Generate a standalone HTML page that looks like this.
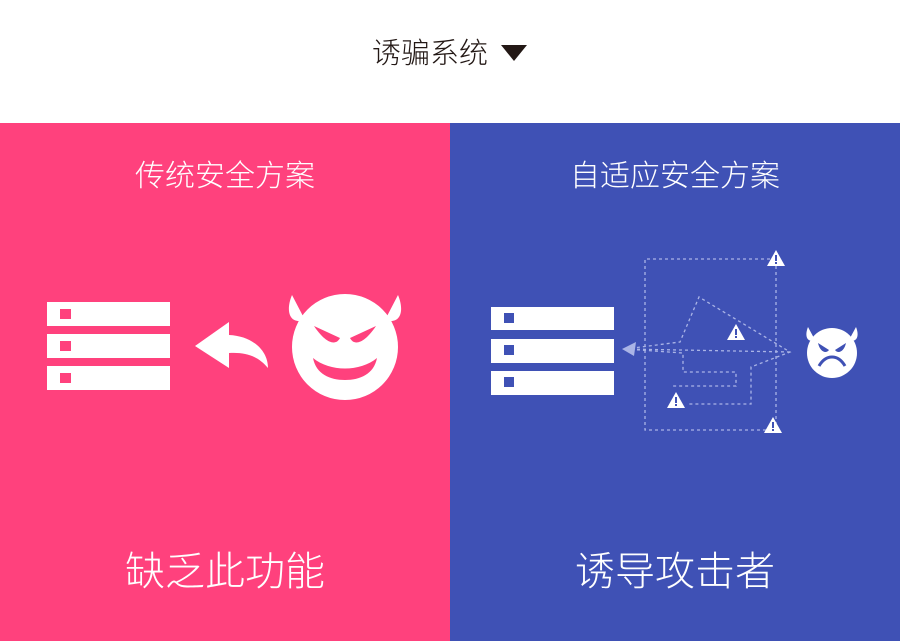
<!DOCTYPE html>
<html><head><meta charset="utf-8"><style>
body{margin:0;width:901px;height:641px;background:#fff;position:relative;overflow:hidden;font-family:"Liberation Sans","Noto Sans CJK SC",sans-serif;}
.t{position:absolute;white-space:nowrap;}
.p{position:absolute;top:123px;height:518px;}
</style></head><body>
<div class="t" style="left:372px;top:34px;font-size:29px;line-height:40px;color:#231815;font-weight:300;">诱骗系统</div>
<svg style="position:absolute;left:500px;top:44px" width="28" height="18"><polygon points="1,1 27,1 14,17" fill="#231815"/></svg>
<div class="p" style="left:0;width:450px;background:#FF417D"></div>
<div class="p" style="left:450px;width:450px;background:#3F51B5"></div>
<div class="t" style="left:0;width:450px;text-align:center;top:157px;font-size:30px;line-height:40px;color:#fff;font-weight:300;">传统安全方案</div>
<div class="t" style="left:450px;width:450px;text-align:center;top:157px;font-size:30px;line-height:40px;color:#fff;font-weight:300;">自适应安全方案</div>
<div class="t" style="left:0;width:450px;text-align:center;top:545px;font-size:40px;line-height:54px;color:#fff;font-weight:300;">缺乏此功能</div>
<div class="t" style="left:450px;width:450px;text-align:center;top:545px;font-size:40px;line-height:54px;color:#fff;font-weight:300;">诱导攻击者</div>
<svg style="position:absolute;left:0;top:0" width="901" height="641">
<g fill="#fff">
<rect x="47" y="302" width="123" height="24"/><rect x="47" y="334" width="123" height="24"/><rect x="47" y="366" width="123" height="24"/>
</g>
<g fill="#FF417D"><rect x="60" y="309" width="11" height="10"/><rect x="60" y="341" width="11" height="10"/><rect x="60" y="373" width="11" height="10"/></g>
<path d="M195,346 L229,322 L229,335 C252,336 268,350 268,368 C258,356 246,352 229,353 L229,368 Z" fill="#fff"/>
<circle cx="345" cy="347" r="53" fill="#fff"/>
<path d="M292,295 C285,312 290,325 305,320 Z M398,295 C405,312 400,325 385,320 Z" fill="#fff"/>
<path d="M314,326 L340,338 C336,346 326,344 314,326 Z M376,326 L350,338 C354,346 364,344 376,326 Z" fill="#FF417D"/>
<path d="M313,358 C330,372 360,372 377,358 C374,374 360,380 345,380 C330,380 316,374 313,358 Z" fill="#FF417D"/>
<g fill="#fff">
<rect x="491" y="307" width="123" height="23"/><rect x="491" y="339" width="123" height="24"/><rect x="491" y="371" width="123" height="24"/>
</g>
<g fill="#3F51B5"><rect x="504" y="313" width="10" height="10"/><rect x="504" y="345" width="10" height="10"/><rect x="504" y="377" width="10" height="10"/></g>
<g fill="none" stroke="#aab4e6" stroke-width="1.3" stroke-dasharray="3,3">
<path d="M776,259 L645,259 L645,430 L776,430 L776,259"/>
<path d="M625,349 L680,342 L699,297 L790,352 L751,367 L751,404 L688,404"/>
<path d="M625,349 L683,353 L683,372 L736,372 L736,386 L673,386"/>
<path d="M625,349 L790,352"/>
</g>
<polygon points="622,349 636,342 634,356" fill="#aab4e6"/>
<g>
<g transform="translate(776,259)"><polygon points="0,-9 9,7 -9,7" fill="#fff"/><rect x="-1" y="-4" width="2" height="6" fill="#3F51B5"/><rect x="-1" y="3" width="2" height="2" fill="#3F51B5"/></g>
<g transform="translate(736,333)"><polygon points="0,-9 9,7 -9,7" fill="#fff"/><rect x="-1" y="-4" width="2" height="6" fill="#3F51B5"/><rect x="-1" y="3" width="2" height="2" fill="#3F51B5"/></g>
<g transform="translate(676,401)"><polygon points="0,-9 9,7 -9,7" fill="#fff"/><rect x="-1" y="-4" width="2" height="6" fill="#3F51B5"/><rect x="-1" y="3" width="2" height="2" fill="#3F51B5"/></g>
<g transform="translate(773,426)"><polygon points="0,-9 9,7 -9,7" fill="#fff"/><rect x="-1" y="-4" width="2" height="6" fill="#3F51B5"/><rect x="-1" y="3" width="2" height="2" fill="#3F51B5"/></g>
</g>
<circle cx="832" cy="353" r="25" fill="#fff"/>
<path d="M808,327 C804,337 808,343 815,340 Z M856,327 C860,337 856,343 849,340 Z" fill="#fff"/>
<path d="M818,343 L829,350 C826,354 820,352 818,343 Z M846,343 L835,350 C838,354 844,352 846,343 Z" fill="#3F51B5"/>
<path d="M819,366 C826,354 838,354 845,366" fill="none" stroke="#3F51B5" stroke-width="3"/>
</svg>
</body></html>
